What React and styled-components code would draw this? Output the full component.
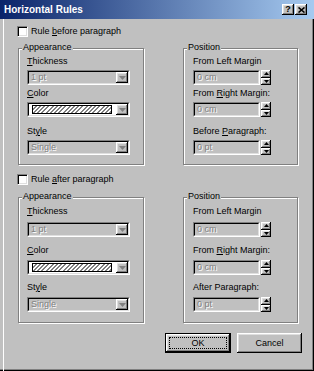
import React from 'react';
import styled, { createGlobalStyle, css } from 'styled-components';

const GlobalStyle = createGlobalStyle`
  html, body {
    margin: 0;
    padding: 0;
    background: #c0c0c0;
  }
  body {
    font-family: "Liberation Sans", Arial, sans-serif;
    font-size: 9px;
    color: #000;
  }
`;

const raised = css`
  background: #c0c0c0;
  box-shadow: inset -1px -1px 0 #000, inset 1px 1px 0 #fff,
    inset -2px -2px 0 #808080, inset 2px 2px 0 #dfdfdf;
`;

const Window = styled.div`
  width: 314px;
  height: 371px;
  box-sizing: border-box;
  background: #c0c0c0;
  box-shadow: inset -1px -1px 0 #000, inset -2px -2px 0 #808080;
  display: flex;
  flex-direction: column;
  overflow: hidden;
`;

const TitleBar = styled.div`
  height: 19px;
  flex: none;
  display: flex;
  align-items: center;
  justify-content: space-between;
  padding: 0 7px 0 4px;
  background: linear-gradient(to right, #0a246a, #a6caf0);
`;

const Title = styled.span`
  color: #fff;
  font-weight: bold;
  font-size: 10px;
`;

const TitleButtons = styled.div`
  display: flex;
  gap: 1px;
`;

const TitleBtn = styled.div`
  ${raised};
  width: 12px;
  height: 11px;
  display: flex;
  align-items: center;
  justify-content: center;
  font-weight: bold;
  font-size: 9px;
  line-height: 1;
`;

const Body = styled.div`
  flex: 1;
  margin-left: 3px;
  border-left: 1px solid #fff;
  padding-left: 13px;
  display: flex;
  flex-direction: column;
`;

const CheckRow = styled.label`
  display: flex;
  align-items: center;
  gap: 3px;
  height: 12px;
  margin-top: ${(p) => p.$mt}px;
`;

const CheckBox = styled.span`
  width: 11px;
  height: 11px;
  box-sizing: border-box;
  background: #fff;
  border: 1px solid;
  border-color: #808080 #fff #fff #808080;
  box-shadow: inset 1px 1px 0 #000, inset -1px -1px 0 #dfdfdf;
`;

const GroupRow = styled.div`
  display: flex;
  gap: 39px;
  padding-left: 1px;
  margin-top: ${(p) => p.$mt}px;
`;

const Group = styled.div`
  position: relative;
  box-sizing: border-box;
  width: ${(p) => p.$w}px;
  border: 1px solid #808080;
  box-shadow: inset 1px 1px 0 #fff, 1px 1px 0 #fff;
  padding: ${(p) => p.$pt}px 0 ${(p) => p.$pb}px ${(p) => p.$pl}px;
`;

const Legend = styled.span`
  position: absolute;
  top: -8px;
  left: 3px;
  padding: 0 1px;
  line-height: 12px;
  background: #c0c0c0;
`;

const Field = styled.div`
  display: flex;
  flex-direction: column;
  gap: ${(p) => p.$gap}px;
  margin-top: ${(p) => p.$mt}px;
`;

const FieldLabel = styled.span`
  line-height: 12px;
  height: 12px;
  white-space: nowrap;
`;

const Sunken = styled.div`
  box-sizing: border-box;
  height: 15px;
  width: ${(p) => p.$w}px;
  border: 1px solid;
  border-color: #808080 #fff #fff #808080;
`;

const SunkenInner = styled.div`
  box-sizing: border-box;
  height: 100%;
  display: flex;
  align-items: center;
  border: 1px solid;
  border-color: #000 #dfdfdf #dfdfdf #000;
  background: ${(p) => (p.$white ? '#fff' : '#c0c0c0')};
`;

const ValueText = styled.span`
  flex: 1;
  padding-left: 2px;
  color: #808080;
  text-shadow: 1px 1px 0 #fff;
  line-height: 11px;
`;

const Hatch = styled.span`
  flex: 1;
  height: 7px;
  margin: 0 4px 0 3px;
  border: 1px solid #000;
  background: repeating-linear-gradient(
    135deg,
    #fff 0 1.5px,
    #808080 1.5px 3px
  );
`;

const DropBtn = styled.span`
  ${raised};
  width: 12px;
  height: 11px;
  flex: none;
  display: flex;
  align-items: center;
  justify-content: center;
`;

const SpinRow = styled.div`
  display: flex;
  gap: 1px;
`;

const Spinner = styled.div`
  width: 10px;
  height: 15px;
  display: flex;
  flex-direction: column;
`;

const SpinBtn = styled.span`
  ${raised};
  flex: 1;
  display: flex;
  align-items: center;
  justify-content: center;
`;

const ButtonRow = styled.div`
  display: flex;
  justify-content: flex-end;
  gap: 6px;
  padding-right: 12px;
  margin-top: 10px;
`;

const Button = styled.div`
  ${raised};
  position: relative;
  box-sizing: border-box;
  width: ${(p) => p.$w}px;
  height: 20px;
  display: flex;
  align-items: center;
  justify-content: center;
  ${(p) =>
    p.$default &&
    css`
      border: 1px solid #000;
      &::after {
        content: '';
        position: absolute;
        inset: 3px;
        border: 1px dotted #000;
      }
    `}
`;

const Arrow = ({ up, color = '#808080' }) => (
  <svg width="7" height="4" viewBox="0 0 7 4">
    <polygon points={up ? '0,4 7,4 3.5,0' : '0,0 7,0 3.5,4'} fill={color} />
  </svg>
);

const SmallArrow = ({ up }) => (
  <svg width="5" height="3" viewBox="0 0 5 3">
    <polygon points={up ? '0,3 5,3 2.5,0' : '0,0 5,0 2.5,3'} fill="#000" />
  </svg>
);

const Combo = ({ value, hatch }) => (
  <Sunken $w={103}>
    <SunkenInner $white={hatch}>
      {hatch ? <Hatch /> : <ValueText>{value}</ValueText>}
      <DropBtn>
        <Arrow />
      </DropBtn>
    </SunkenInner>
  </Sunken>
);

const Spin = ({ value }) => (
  <SpinRow>
    <Sunken $w={67}>
      <SunkenInner>
        <ValueText>{value}</ValueText>
      </SunkenInner>
    </Sunken>
    <Spinner>
      <SpinBtn>
        <SmallArrow up />
      </SpinBtn>
      <SpinBtn>
        <SmallArrow />
      </SpinBtn>
    </Spinner>
  </SpinRow>
);

const layouts = {
  before: { pt: 6, pb: 9, rows: [{ mt: 0, gap: 3 }, { mt: 2, gap: 3 }, { mt: 8, gap: 3 }] },
  after: { pt: 7, pb: 10, rows: [{ mt: 0, gap: 5 }, { mt: 7, gap: 4 }, { mt: 6, gap: 4 }] },
};

const RuleSection = ({ checkTop, groupTop, checkLabel, layout, lastLabel }) => {
  const l = layouts[layout];
  const appearance = [
    { label: <><u>T</u>hickness</>, control: <Combo value="1 pt" /> },
    { label: <><u>C</u>olor</>, control: <Combo hatch /> },
    { label: <>St<u>y</u>le</>, control: <Combo value="Single" /> },
  ];
  const position = [
    { label: 'From Left Margin', control: <Spin value="0 cm" /> },
    { label: <>From <u>R</u>ight Margin:</>, control: <Spin value="0 cm" /> },
    { label: lastLabel, control: <Spin value="0 pt" /> },
  ];
  return (
    <>
      <CheckRow $mt={checkTop}>
        <CheckBox />
        <span>{checkLabel}</span>
      </CheckRow>
      <GroupRow $mt={groupTop}>
        <Group $w={126} $pt={l.pt} $pb={l.pb} $pl={8}>
          <Legend>Appearance</Legend>
          {appearance.map((f, i) => (
            <Field key={i} $mt={l.rows[i].mt} $gap={l.rows[i].gap}>
              <FieldLabel>{f.label}</FieldLabel>
              {f.control}
            </Field>
          ))}
        </Group>
        <Group $w={115} $pt={l.pt} $pb={l.pb} $pl={9}>
          <Legend>Position</Legend>
          {position.map((f, i) => (
            <Field key={i} $mt={l.rows[i].mt} $gap={l.rows[i].gap}>
              <FieldLabel>{f.label}</FieldLabel>
              {f.control}
            </Field>
          ))}
        </Group>
      </GroupRow>
    </>
  );
};

const App = () => (
  <>
    <GlobalStyle />
    <Window>
      <TitleBar>
        <Title>Horizontal Rules</Title>
        <TitleButtons>
          <TitleBtn>?</TitleBtn>
          <TitleBtn>
            <svg width="7" height="6" viewBox="0 0 7 6">
              <path d="M0.5 0.5 L6.5 5.5 M6.5 0.5 L0.5 5.5" stroke="#000" strokeWidth="1.6" />
            </svg>
          </TitleBtn>
        </TitleButtons>
      </TitleBar>
      <Body>
        <RuleSection
          checkTop={6}
          groupTop={11}
          layout="before"
          checkLabel={<>Rule <u>b</u>efore paragraph</>}
          lastLabel={<>Before <u>P</u>aragraph:</>}
        />
        <RuleSection
          checkTop={8}
          groupTop={12}
          layout="after"
          checkLabel={<>Rule <u>a</u>fter paragraph</>}
          lastLabel={<>After Paragraph:</>}
        />
        <ButtonRow>
          <Button $w={66} $default>OK</Button>
          <Button $w={65}>Cancel</Button>
        </ButtonRow>
      </Body>
    </Window>
  </>
);

export default App;
